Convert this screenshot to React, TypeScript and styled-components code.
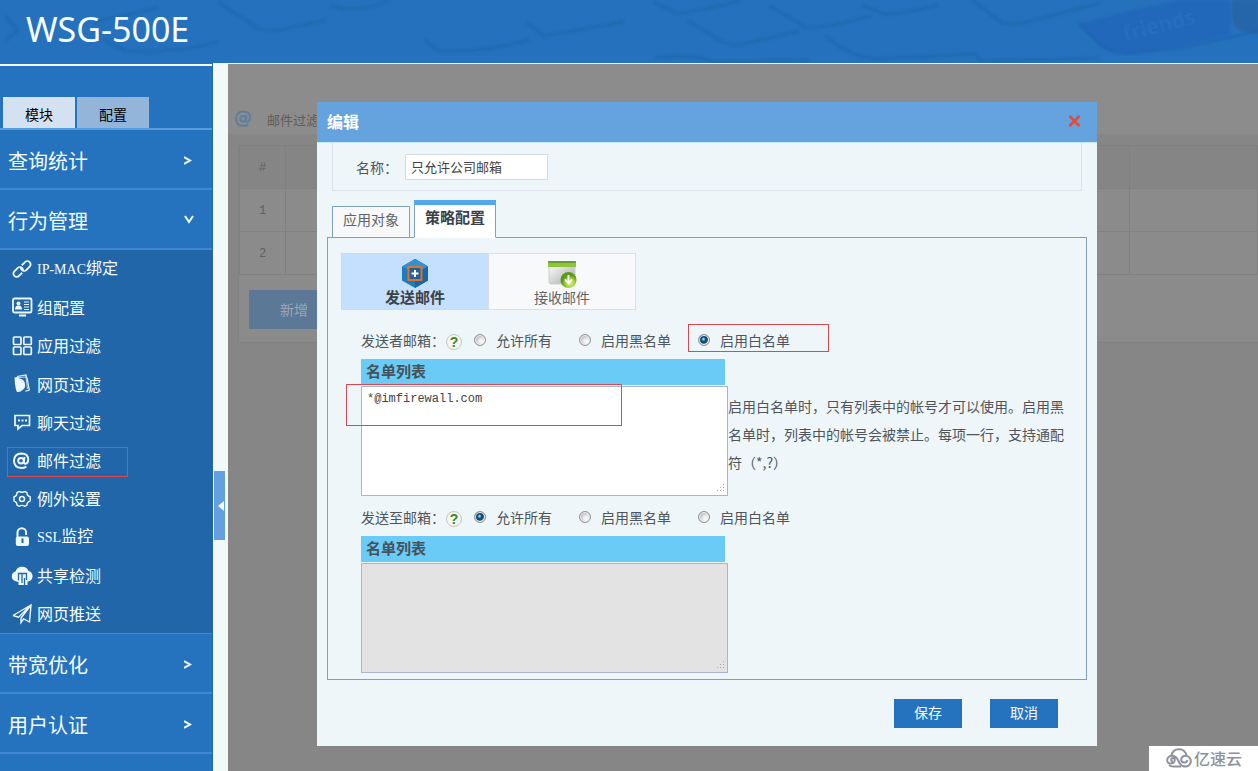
import React, { useState } from "react";
import styled, { createGlobalStyle, css } from "styled-components";

const sans = `"Noto Sans CJK SC", "Liberation Sans", sans-serif`;

const GlobalStyle = createGlobalStyle`
  *, *::before, *::after { box-sizing: border-box; }
  body { margin: 0; font-family: ${sans}; font-size: 14px; font-weight: 400; color: #4f555a; }
  button, input, textarea { font-family: inherit; font-weight: inherit; margin: 0; }
  ul { list-style: none; margin: 0; padding: 0; }
`;

const Page = styled.div`
  display: flex;
  flex-direction: column;
  min-height: 100vh;
  position: relative;
`;

/* ---------- top banner ---------- */

const Banner = styled.header`
  position: relative;
  display: flex;
  align-items: center;
  height: 63px;
  padding: 0 26px 6px;
  background: #2571bd;
  overflow: hidden;
`;

const BannerArt = styled.svg`
  position: absolute;
  inset: 0;
  width: 100%;
  height: 100%;
`;

const ProductName = styled.h1`
  position: relative;
  margin: 0;
  font: 400 34px/46px "Noto Sans", sans-serif;
  color: #f6fdff;
`;

function KeyboardArt() {
  return (
    <BannerArt viewBox="0 0 1258 63" preserveAspectRatio="xMidYMid slice" aria-hidden="true">
      <defs>
        <filter id="soft" x="-10%" y="-10%" width="120%" height="120%"><feGaussianBlur stdDeviation="1.1" /></filter>
      </defs>
      <path d="M1079 24Q1140 8 1180 0H1230V34L1182 46 1148 52Q1118 56 1106 50Z" fill="#2167ba" filter="url(#soft)" />
      <path d="M1232 0h26v34l-16-3q-10-4-10-14z" fill="#2665a8" filter="url(#soft)" />
      <g fill="none" stroke="#2068ae" strokeWidth="3" opacity=".8" filter="url(#soft)">
        <path d="M5 16l13 14-12 10" />
        <path d="M95 22l62-14M104 40l22 11q40 4 92-9" />
        <path d="M218 2l38 25q10 6 28 2l42-9" />
        <path d="M330 6q30 8 60-6" />
        <path d="M425 40l14 11q40 2 90-11" />
        <path d="M526 22l18 14 80-14" />
        <path d="M654 2l22 11q16 0 64-12" />
        <path d="M688 21l33 20q12 6 26 2l52-12" />
        <path d="M770 6l34 20q6 4 34-2" />
        <path d="M838 24l34-8M862 5l22 9q20 0 54-9" />
        <path d="M972 0l30 23q8 4 36-4l62-16" />
        <path d="M825 35q20 20 50 24l100-5 8 8" />
        <path d="M655 58q40-5 60 4l94-2" />
        <path d="M985 61l114-3" />
      </g>
      <path d="M1079 24l22 21q12 9 30 8l50-5 77-17" fill="none" stroke="#1e5fa8" strokeWidth="2" opacity=".6" filter="url(#soft)" />
      <text x="1125" y="41" transform="rotate(-14 1125 41)" fontFamily="Noto Sans" fontWeight="700" fontSize="21" fill="#3a7cc4" opacity=".25">friends</text>
    </BannerArt>
  );
}

/* ---------- sidebar ---------- */

const Columns = styled.div`
  flex: 1;
  display: flex;
`;

const Sidebar = styled.nav`
  flex: 0 0 213px;
  display: flex;
  flex-direction: column;
  background: #2573be;
  border-top: 1px solid #2571bd;
  border-right: 1px solid #1f68b2;
`;

const ModeTabs = styled.div`
  display: flex;
  gap: 2px;
  padding: 31px 3px 0;
  border-top: 2px solid #f1fbff;
  border-bottom: 2px solid #569bdc;
`;

const ModeTab = styled.button<{ $active?: boolean }>`
  width: 72px;
  height: 31px;
  padding: 2px 0 0;
  border: 0;
  font-size: 14px;
  line-height: 20px;
  color: #000;
  background: ${(p) => (p.$active ? "#d3e1f0" : "#92b5d9")};
`;

const Section = styled.button`
  display: flex;
  align-items: center;
  justify-content: space-between;
  height: 60px;
  padding: 4px 16px 0 8px;
  border: 0;
  border-bottom: 2px solid #4089d2;
  background: none;
  color: #f4fcff;
  font-size: 20px;
  line-height: 30px;
`;

const Chevron = styled.svg`
  width: 12px;
  height: 12px;
  fill: none;
  stroke: #f4fcff;
  stroke-width: 2;
`;

const SubMenu = styled.ul`
  display: grid;
  grid-template-rows: repeat(10, 1fr);
  height: 384px;
  background: #2166a9;
  border-bottom: 1px solid #4089d2;
`;

const SubItem = styled.li`
  position: relative;
  display: flex;
`;

const SubLink = styled.a`
  display: flex;
  align-items: center;
  gap: 4px;
  padding-left: 11px;
  color: #f4fcff;
  font-size: 16px;
  line-height: 24px;
  text-decoration: none;
`;

const SubLabel = styled.span`
  padding-bottom: 1px;
`;

const Latin = styled.span`
  font: 14px/24px "Liberation Serif", serif;
`;

const MenuIcon = styled.svg`
  width: 22px;
  height: 22px;
  fill: none;
  stroke: #eef8ff;
  stroke-width: 2;
`;

const Marker = styled.span<{ $x: number; $y: number; $w: number; $h: number }>`
  position: absolute;
  left: ${(p) => p.$x}px;
  top: ${(p) => p.$y}px;
  width: ${(p) => p.$w}px;
  height: ${(p) => p.$h}px;
  border: 1px solid #dd4850;
  pointer-events: none;
`;

const Gutter = styled.div`
  flex: 0 0 15px;
  padding-left: 1px;
  background: #f1faf9;
`;

const CollapseHandle = styled.button`
  display: flex;
  align-items: center;
  justify-content: flex-end;
  width: 11px;
  height: 69px;
  margin-top: 408px;
  padding: 0 1px 0 0;
  border: 0;
  background: #65a0de;
`;

const icons: Record<string, React.ReactNode> = {
  link: (
    <g transform="rotate(-45 11 11)" strokeWidth="1.8">
      <path d="M8.500 13.800H4a3.300 3.300 0 0 1-3.300-3.300A3.300 3.300 0 0 1 4 7.200h4.500a3.300 3.300 0 0 1 3.300 3.300 3.300 3.300 0 0 1-1.200 2.500" />
      <path d="M13.500 8.200H18a3.300 3.300 0 0 1 3.300 3.300A3.300 3.300 0 0 1 18 14.800h-4.500a3.300 3.300 0 0 1-3.300-3.300 3.300 3.300 0 0 1 1.200-2.500" />
    </g>
  ),
  group: (
    <>
      <rect x="2" y="2.500" width="18.500" height="14" rx="1.500" strokeWidth="1.800" />
      <circle cx="7.500" cy="7.500" r="2" fill="#eef8ff" stroke="none" />
      <path d="M4 13.500q0-4 3.500-4t3.500 4z" fill="#eef8ff" stroke="none" />
      <path d="M13 6h5M13 8.500h5M13 11h5M13 13.500h5" strokeWidth="1" />
      <path d="M8 19.500h7" />
    </>
  ),
  apps: (
    <>
      <rect x="2.500" y="2" width="7.500" height="7.500" rx="1" strokeWidth="1.700" />
      <rect x="12.800" y="2" width="7.500" height="7.500" rx="1" strokeWidth="1.700" />
      <rect x="2.500" y="12" width="7.500" height="7.500" rx="1" strokeWidth="1.700" />
      <rect x="12.800" y="12" width="7.500" height="7.500" rx="1" strokeWidth="1.700" />
    </>
  ),
  web: (
    <>
      <path d="M6 3.500L15 2l.5 2.500M16 4.500l2.300 12.500-4 1.200" strokeWidth="1.200" />
      <path d="M3.500 4.500l3-.5q1 1.500 4 2 3.500 1.500 3.500 5.500.5 4-2.500 5.500-2 2.500-5.500 2-1.500-3-2-8z" fill="#eef8ff" stroke="none" />
      <path d="M7 4.500l8-.5 1.500 12" strokeWidth=".8" />
    </>
  ),
  chat: (
    <>
      <path d="M4 4.500h14.500v10H11L7 18v-3.500H4z" strokeWidth="1.700" />
      <path d="M7 9.500h2M10.500 9.500h2M14 9.500h2" />
    </>
  ),
  at: (
    <>
      <circle cx="10" cy="10.800" r="2.800" />
      <path d="M13.600 7l-.8 5q0 1.800 1.500 1.800 2.900-.5 2.900-4 0-6.300-6.800-6.300-7.200.2-7.400 7.300.2 7 7.200 7.200 3 0 5.200-1.400" strokeWidth="1.900" />
    </>
  ),
  gear: (
    <>
      <path d="M8 3.500q3 1.500 6 0l2 1.200q-.3 2.800 3.200 4.200v4q-3.500 1.400-3.200 4.200l-2 1.200q-3-1.800-6 0l-2-1.200q.3-2.800-3-4.200V9Q6.300 7.500 6 4.700z" strokeWidth="1.400" />
      <circle cx="11" cy="11" r="2.500" strokeWidth="1.500" />
    </>
  ),
  lock: (
    <>
      <path d="M6.500 11V6.500a4.300 4.300 0 0 1 8.600 0V9" />
      <rect x="4.800" y="10.500" width="13.200" height="9.500" rx="2" fill="#eef8ff" stroke="none" />
      <path d="M11.500 12.500v4.500" stroke="#2166a9" />
    </>
  ),
  share: (
    <>
      <path d="M4 16a5 5 0 0 1 .5-9.500A7 7 0 0 1 17.500 6 5.500 5.500 0 0 1 19 16l-2.500.5V20h-9v-3z" fill="#eef8ff" stroke="none" />
      <path d="M7.500 15.500V8.500h3.500V18M11.500 8.500h4V15M13.500 20v-7" stroke="#2166a9" strokeWidth="1.300" />
    </>
  ),
  plane: (
    <path d="M2 12.500L20 2l-1.500 17-6.500-3.500M2 12.500l5.500 1.700L20 2 10 15v4.500l2.500-3.500" strokeWidth="1.400" />
  ),
};

const subItems = [
  { icon: "link", latin: "IP-MAC", label: "绑定" },
  { icon: "group", label: "组配置" },
  { icon: "apps", label: "应用过滤" },
  { icon: "web", label: "网页过滤" },
  { icon: "chat", label: "聊天过滤" },
  { icon: "at", label: "邮件过滤", marked: true },
  { icon: "gear", label: "例外设置" },
  { icon: "lock", latin: "SSL", label: "监控" },
  { icon: "share", label: "共享检测" },
  { icon: "plane", label: "网页推送" },
];

function SectionButton({ label, open }: { label: string; open?: boolean }) {
  return (
    <Section type="button" aria-expanded={!!open}>
      {label}
      <Chevron viewBox="0 0 12 12" aria-hidden="true">
        <path d={open ? "M1 1l4 6 4-6" : "M0 2l6 3.500-6 3.500"} />
      </Chevron>
    </Section>
  );
}

/* ---------- dimmed page behind the dialog ---------- */

const Main = styled.main`
  position: relative;
  flex: 1;
  min-width: 0;
  background: #868686;
  border-top: 1px solid #eef6fa;
`;

const PageTitle = styled.div`
  display: flex;
  align-items: flex-end;
  gap: 15px;
  height: 70px;
  padding: 0 7px 4px;
  background: #8c8c8c;
  font-size: 13px;
  line-height: 20px;
  color: #5c5c5c;
`;

const TitleIcon = styled.svg`
  width: 17px;
  height: 22px;
  fill: none;
  stroke: #5e7f99;
  stroke-width: 2;
`;

const Card = styled.section`
  margin: 11px 0 0 10px;
  padding-bottom: 13px;
  background: #8b8b8b;
  border: 1px solid #818181;
  border-width: 0 0 1px 1px;
`;

const Grid = styled.table`
  width: 100%;
  border-collapse: collapse;
  table-layout: fixed;
  font: 12px/20px "Liberation Mono", monospace;
  color: #5f5f5f;
`;

const Cell = styled.td<{ $head?: boolean }>`
  height: 43px;
  padding: 2px 0 0;
  text-align: center;
  border: 1px solid #808080;
  ${(p) => p.$head && css`background: #858585; font-weight: 400;`}
`;

const Add = styled.button`
  width: 90px;
  height: 39px;
  margin: 15px 0 0 10px;
  padding: 0 0 1px;
  border: 0;
  background: #5b7896;
  color: #9aa6b2;
  font-size: 14px;
`;

/* ---------- dialog ---------- */

const Dialog = styled.div`
  position: absolute;
  left: 89px;
  top: 38px;
  width: 780px;
  max-width: calc(100% - 89px);
  padding-bottom: 18px;
  background: #eef6fa;
`;

const DialogBar = styled.div`
  display: flex;
  align-items: center;
  justify-content: space-between;
  height: 41px;
  padding: 0 14px 2px 10px;
  background: #65a3df;
  border-bottom: 1px solid #c5e6fb;
`;

const DialogTitle = styled.h2`
  margin: 0;
  font-size: 16px;
  line-height: 24px;
  color: #fff;
`;

const Close = styled.button`
  display: flex;
  padding: 0;
  border: 0;
  background: none;
`;

const NameBox = styled.div`
  display: flex;
  align-items: center;
  gap: 7px;
  height: 48px;
  margin: 0 15px;
  padding-left: 23px;
  border: 1px solid #dce3e8;
  border-top: 0;
`;

const NameInput = styled.input`
  width: 143px;
  height: 26px;
  padding: 0 5px;
  border: 1px solid #d4dae0;
  background: #fff;
  color: #444;
  font-size: 13px;
`;

const Tabs = styled.div`
  display: flex;
  align-items: flex-end;
  gap: 4px;
  margin: 9px 10px -1px;
  padding-left: 5px;
  position: relative;
`;

const Tab = styled.button<{ $active?: boolean }>`
  padding: 0;
  border: 1px solid #7c9fc2;
  line-height: 20px;
  ${(p) =>
    p.$active
      ? css`
          width: 82px;
          height: 38px;
          padding-bottom: 9px;
          border-top: 5px solid #52a8ec;
          border-bottom-color: #fff;
          background: #fff;
          color: #3c4146;
          font-size: 15px;
          font-weight: 700;
        `
      : css`
          width: 78px;
          height: 32px;
          padding-bottom: 7px;
          background: #f7f8f9;
          color: #606468;
          font-size: 14px;
        `}
`;

const Panel = styled.div`
  margin: 0 10px;
  padding: 15px 13px 6px;
  border: 1px solid #7c9fc2;
`;

const Kinds = styled.div`
  display: flex;
`;

const Kind = styled.button<{ $active?: boolean }>`
  display: flex;
  flex-direction: column;
  align-items: center;
  width: 148px;
  height: 57px;
  padding: 4px 0 0;
  border: 1px solid ${(p) => (p.$active ? "#c4dcf4" : "#d8dfe8")};
  margin-right: -1px;
  background: ${(p) => (p.$active ? "#c4e0fe" : "#f8f9fa")};
  color: ${(p) => (p.$active ? "#3c4146" : "#606468")};
  font-size: ${(p) => (p.$active ? 15 : 14)}px;
  font-weight: ${(p) => (p.$active ? 700 : 400)};
  line-height: 18px;
`;

const KindIcon = styled.svg`
  flex: none;
  width: 30px;
  height: 30px;
`;

const Lists = styled.div`
  padding: 9px 0 0 20px;
`;

const List = styled.fieldset`
  position: relative;
  min-width: 0;
  margin: 0;
  padding: 0;
  border: 0;
`;

const Choice = styled.div`
  display: flex;
  align-items: center;
  height: 28px;
  margin: 7px 0 5px;
  padding-bottom: 1px;
`;

const ChoiceName = styled.span`
  width: 85px;
  white-space: nowrap;
`;

const Help = styled.button`
  display: flex;
  align-items: center;
  justify-content: center;
  width: 16px;
  height: 16px;
  margin-top: 4px;
  padding: 0;
  border: 1px solid #c3c8c6;
  border-radius: 50%;
  background: #f3f5f2;
  color: #3c8a14;
  font: 700 14px/14px "Liberation Sans", sans-serif;
`;

const Options = styled.div`
  display: flex;
  gap: 27px;
  margin-left: 12px;
`;

const Option = styled.label`
  position: relative;
  display: flex;
  align-items: center;
  gap: 10px;
  line-height: 20px;
  white-space: nowrap;
`;

const Radio = styled.input`
  appearance: none;
  flex: none;
  width: 12px;
  height: 12px;
  border: 1px solid #8f9296;
  border-radius: 50%;
  background: radial-gradient(circle at 65% 65%, #f4f4f4 0 20%, #b9bbbe 70%);
  box-shadow: inset 0 0 0 1px #f2f4f5;
  &:checked {
    background: radial-gradient(circle at 45% 42%, #8fd4ee 0 8%, #0f4f74 26% 50%, #b9c6ce 64%);
  }
`;

const ListHead = styled.div`
  width: 364px;
  height: 26px;
  padding-left: 5px;
  background: #69cbf6;
  color: #46525a;
  font-size: 15px;
  font-weight: 700;
  line-height: 24px;
`;

const ListBody = styled.div`
  position: relative;
  display: flex;
  margin-top: 1px;
`;

const Addresses = styled.textarea`
  flex: none;
  width: 367px;
  height: 110px;
  padding: 4px 5px;
  border: 1px solid #abb4c9;
  background: #fff;
  color: #444;
  font: 12px/16px "Liberation Mono", monospace;
  resize: both;
  &:disabled {
    background: #e3e3e3;
  }
  &::-webkit-resizer {
    background:
      linear-gradient(#a9a9a9, #a9a9a9) 11px 4px / 1px 1px no-repeat,
      linear-gradient(#a9a9a9, #a9a9a9) 8px 7px / 1px 1px no-repeat,
      linear-gradient(#a9a9a9, #a9a9a9) 11px 7px / 1px 1px no-repeat,
      linear-gradient(#a9a9a9, #a9a9a9) 5px 10px / 1px 1px no-repeat,
      linear-gradient(#a9a9a9, #a9a9a9) 8px 10px / 1px 1px no-repeat,
      linear-gradient(#a9a9a9, #a9a9a9) 11px 10px / 1px 1px no-repeat;
  }
`;

const Hint = styled.p`
  width: 337px;
  margin: 6px 0 0;
  line-height: 28px;
`;

const Actions = styled.div`
  display: flex;
  justify-content: flex-end;
  gap: 28px;
  padding: 19px 39px 0;
`;

const Action = styled.button`
  width: 68px;
  height: 29px;
  padding: 0 0 3px;
  border: 0;
  background: #2573be;
  color: #f4fcff;
  font-size: 14px;
`;

const Watermark = styled.div`
  position: absolute;
  right: 0;
  bottom: 0;
  display: flex;
  align-items: center;
  gap: 2px;
  width: 109px;
  height: 25px;
  padding: 0 0 1px 17px;
  background: #fff;
  color: #8d929c;
  font-size: 16px;
  font-weight: 500;
  line-height: 22px;
`;

function AddressList(props: {
  id: string;
  title: string;
  initial: string;
  value?: string;
  hint?: string;
  marked?: boolean;
}) {
  const [mode, setMode] = useState(props.initial);
  return (
    <List aria-label={props.title}>
      <Choice>
        <ChoiceName>{props.title}：</ChoiceName>
        <Help type="button" aria-label="帮助">?</Help>
        <Options>
          {["允许所有", "启用黑名单", "启用白名单"].map((name) => (
            <Option key={name}>
              <Radio type="radio" name={props.id} checked={mode === name} onChange={() => setMode(name)} />
              {name}
              {props.marked && name === "启用白名单" && <Marker $x={-10} $y={-6} $w={141} $h={28} />}
            </Option>
          ))}
        </Options>
      </Choice>
      <ListHead id={props.id}>名单列表</ListHead>
      <ListBody>
        <Addresses aria-labelledby={props.id} defaultValue={props.value} disabled={mode === "允许所有"} spellCheck={false} />
        {props.hint && <Hint>{props.hint}</Hint>}
        {props.marked && <Marker $x={-15} $y={-2} $w={276} $h={42} />}
      </ListBody>
    </List>
  );
}

export default function App() {
  return (
    <Page lang="zh-CN">
      <GlobalStyle />
      <Banner>
        <KeyboardArt />
        <ProductName>WSG-500E</ProductName>
      </Banner>
      <Columns>
        <Sidebar>
          <ModeTabs>
            <ModeTab type="button" $active>模块</ModeTab>
            <ModeTab type="button">配置</ModeTab>
          </ModeTabs>
          <SectionButton label="查询统计" />
          <SectionButton label="行为管理" open />
          <SubMenu>
            {subItems.map((item) => (
              <SubItem key={item.label}>
                <SubLink href="#">
                  <MenuIcon viewBox="0 0 22 22" aria-hidden="true">{icons[item.icon]}</MenuIcon>
                  <SubLabel>
                    {item.latin && <Latin>{item.latin}</Latin>}
                    {item.label}
                  </SubLabel>
                </SubLink>
                {item.marked && <Marker $x={7} $y={6} $w={121} $h={30} />}
              </SubItem>
            ))}
          </SubMenu>
          <SectionButton label="带宽优化" />
          <SectionButton label="用户认证" />
        </Sidebar>
        <Gutter>
          <CollapseHandle type="button" aria-label="收起">
            <svg width="6" height="10" viewBox="0 0 6 10" aria-hidden="true">
              <path d="M6 0v10L0 5z" fill="#f4fcff" />
            </svg>
          </CollapseHandle>
        </Gutter>
        <Main>
          <PageTitle>
            <TitleIcon viewBox="2 0 17 22" aria-hidden="true">{icons.at}</TitleIcon>
            邮件过滤
          </PageTitle>
          <Card>
            <Grid>
              <colgroup>
                <col style={{ width: 46 }} />
                <col />
                <col style={{ width: 128 }} />
              </colgroup>
              <thead>
                <tr>
                  <Cell as="th" $head>#</Cell>
                  <Cell as="th" $head />
                  <Cell as="th" $head />
                </tr>
              </thead>
              <tbody>
                {[1, 2].map((n) => (
                  <tr key={n}>
                    <Cell>{n}</Cell>
                    <Cell />
                    <Cell />
                  </tr>
                ))}
              </tbody>
            </Grid>
            <Add type="button">新增</Add>
          </Card>

          <Dialog role="dialog" aria-labelledby="dialog-title">
            <DialogBar>
              <DialogTitle id="dialog-title">编辑</DialogTitle>
              <Close type="button" aria-label="关闭">
                <svg width="16" height="16" viewBox="0 0 16 16" aria-hidden="true">
                  <path d="M2.500 3l10 10M12.500 3l-10 10" stroke="#e24a3a" strokeWidth="2.600" />
                </svg>
              </Close>
            </DialogBar>
            <NameBox>
              <label htmlFor="name">名称：</label>
              <NameInput id="name" defaultValue="只允许公司邮箱" />
            </NameBox>
            <Tabs role="tablist">
              <Tab type="button" role="tab" aria-selected={false}>应用对象</Tab>
              <Tab type="button" role="tab" aria-selected $active>策略配置</Tab>
            </Tabs>
            <Panel>
              <Kinds>
                <Kind type="button" $active>
                  <KindIcon viewBox="0 0 30 30" aria-hidden="true">
                    <path d="M15 1l13 7.500v14L15 30 2 22.500v-14z" fill="#1d7cc0" />
                    <path d="M15 1l13 7.500v14L15 30z" fill="#1567a6" />
                    <path d="M15 1l13 7.500L15 15 2 8.500z" fill="#3291d2" />
                    <rect x="8.500" y="9" width="13" height="13" fill="#24609a" stroke="#e0702c" strokeWidth="2" />
                    <path d="M15 12v7M11.500 15.500h7" stroke="#fff" strokeWidth="2" />
                  </KindIcon>
                  发送邮件
                </Kind>
                <Kind type="button">
                  <KindIcon viewBox="0 0 30 30" aria-hidden="true">
                    <defs>
                      <linearGradient id="sheet" x1="0" y1="0" x2="1" y2="1">
                        <stop offset="0" stopColor="#fff" />
                        <stop offset="1" stopColor="#a8a8a8" />
                      </linearGradient>
                      <radialGradient id="ball" cx=".6" cy=".7">
                        <stop offset="0" stopColor="#dff27a" />
                        <stop offset=".6" stopColor="#a3cf3c" />
                        <stop offset="1" stopColor="#5c9a1e" />
                      </radialGradient>
                    </defs>
                    <path d="M2 5h26v19q0 2-2 2H4q-2 0-2-2z" fill="url(#sheet)" stroke="#ccc" strokeWidth="1" />
                    <path d="M1 5q0-2 2-2h24q2 0 2 2v4H1z" fill="#8cc63a" />
                    <path d="M1 4h28" stroke="#5d8f2a" strokeWidth="1.500" />
                    <circle cx="21.500" cy="22" r="8" fill="url(#ball)" />
                    <path d="M21.500 17v8M18 21.500l3.500 4 3.500-4" fill="none" stroke="#fff" strokeWidth="1.800" />
                  </KindIcon>
                  接收邮件
                </Kind>
              </Kinds>
              <Lists>
                <AddressList
                  id="sender"
                  title="发送者邮箱"
                  initial="启用白名单"
                  value="*@imfirewall.com"
                  hint="启用白名单时，只有列表中的帐号才可以使用。启用黑名单时，列表中的帐号会被禁止。每项一行，支持通配符（*,?）"
                  marked
                />
                <AddressList id="recipient" title="发送至邮箱" initial="允许所有" />
              </Lists>
            </Panel>
            <Actions>
              <Action type="button">保存</Action>
              <Action type="button">取消</Action>
            </Actions>
          </Dialog>
        </Main>
      </Columns>
      <Watermark>
        <svg width="26" height="20" viewBox="0 0 26 20" fill="none" stroke="#8d929c" strokeWidth="2" aria-hidden="true">
          <path d="M5.500 8C6 3.500 9 1.200 13 1.200S20 4 20.500 8" />
          <path d="M7 13.500a1.800 1.800 0 1 1 1.800-1.800c0 5-7.600 5-7.600.8 0-3 2.300-4.700 5-4.700 3 0 4.800 2 6.300 5.200 1.500 3.500 3.500 5.500 6.500 5.500 3.500 0 5.800-2.400 5.800-5.300S22.500 7.800 19.500 7.800c-2.800 0-4.300 1.800-4.300 3.800 0 4 6 3.800 6 .4" />
          <path d="M3 17q1.500 1.500 4 1.500h8" />
        </svg>
        亿速云
      </Watermark>
    </Page>
  );
}
